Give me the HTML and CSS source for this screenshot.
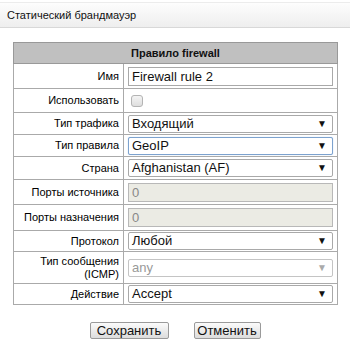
FILE: index.html
```html
<!DOCTYPE html>
<html lang="ru">
<head>
    <meta charset="UTF-8" />
    <title>Статический брандмауэр</title>
    <link rel="stylesheet" href="styles.css">
</head>
<body>
<div class="page-title">Статический брандмауэр</div>

<table class="rule-table">
    <tr class="head-row">
        <th colspan="2">Правило firewall</th>
    </tr>
    <tr class="r25">
        <td class="label">Имя</td>
        <td class="field"><input type="text" class="text-input" value="Firewall rule 2"></td>
    </tr>
    <tr class="r24">
        <td class="label">Использовать</td>
        <td class="field"><input type="checkbox" class="check"></td>
    </tr>
    <tr class="r22">
        <td class="label">Тип трафика</td>
        <td class="field">
            <div class="select-box"><span class="select-value">Входящий</span><span class="arrow">▼</span></div>
        </td>
    </tr>
    <tr class="r22">
        <td class="label">Тип правила</td>
        <td class="field">
            <div class="select-box focused"><span class="select-value">GeoIP</span><span class="arrow">▼</span></div>
        </td>
    </tr>
    <tr class="r23">
        <td class="label">Страна</td>
        <td class="field">
            <div class="select-box"><span class="select-value">Afghanistan (AF)</span><span class="arrow">▼</span></div>
        </td>
    </tr>
    <tr class="r25">
        <td class="label">Порты источника</td>
        <td class="field"><input type="text" class="text-input" value="0" disabled></td>
    </tr>
    <tr class="r26">
        <td class="label">Порты назначения</td>
        <td class="field"><input type="text" class="text-input" value="0" disabled></td>
    </tr>
    <tr class="r21">
        <td class="label">Протокол</td>
        <td class="field">
            <div class="select-box"><span class="select-value">Любой</span><span class="arrow">▼</span></div>
        </td>
    </tr>
    <tr class="r32">
        <td class="label">Тип сообщения<br>(ICMP)</td>
        <td class="field">
            <div class="select-box disabled"><span class="select-value">any</span><span class="arrow">▼</span></div>
        </td>
    </tr>
    <tr class="r21">
        <td class="label">Действие</td>
        <td class="field">
            <div class="select-box"><span class="select-value">Accept</span><span class="arrow">▼</span></div>
        </td>
    </tr>
</table>

<div class="buttons">
    <button class="btn btn-save">Сохранить</button>
    <button class="btn btn-cancel">Отменить</button>
</div>
</body>
</html>
```

FILE: styles.css
```css
* {
    box-sizing: border-box;
    margin: 0;
    padding: 0;
}

body {
    background-color: white;
    font-family: 'Liberation Sans', Arial, sans-serif;
    font-size: 11px;
    color: #111;
}

.page-title {
    margin-top: 2px;
    height: 26px;
    line-height: 25px;
    padding-left: 7px;
    background: linear-gradient(#fdfdfd, #eeeeee);
    border-top: 1px solid #ececec;
    border-bottom: 1px solid #d8d8d8;
    color: #111;
}

.rule-table {
    margin: 14px 0 0 13px;
    width: 325px;
    border-collapse: collapse;
    border: 1px solid #999;
}

.head-row th {
    height: 21px;
    background-color: #c0c0c0;
    font-weight: bold;
    font-size: 11px;
    text-align: center;
    border: 1px solid #999;
    color: #111;
}

.rule-table td {
    border: 1px solid #aaa;
    vertical-align: middle;
}

.r21 td { height: 21px; }
.r22 td { height: 22px; }
.r23 td { height: 23px; }
.r24 td { height: 24px; }
.r25 td { height: 25px; }
.r26 td { height: 26px; }
.r32 td { height: 32px; }

.label {
    width: 110px;
    text-align: right;
    padding-right: 4px;
    line-height: 13px;
    color: #000;
}

.field {
    padding: 0 4px;
}

.text-input {
    display: block;
    width: 100%;
    height: 19px;
    padding: 0 3px;
    border: 1px solid #a9a9a9;
    font-family: 'Liberation Sans', Arial, sans-serif;
    font-size: 13px;
    color: #111;
    background-color: white;
}

.text-input:disabled {
    background-color: #ebebe4;
    color: #888;
    border-color: #b8b8b8;
}

.check {
    display: block;
    appearance: none;
    width: 12px;
    height: 12px;
    margin-left: 3px;
    border: 1px solid #b4b4b4;
    border-radius: 3px;
    background: linear-gradient(#f4f4f4, #dedede);
}

.select-box {
    position: relative;
    height: 18px;
    border: 1px solid #a9a9a9;
    border-radius: 2px;
    background-color: white;
    font-size: 13px;
    line-height: 16px;
    padding-left: 3px;
    color: #111;
}

.select-box.focused {
    border-color: #7da2ce;
    box-shadow: 0 0 1px #9cc0ea;
}

.select-box.disabled {
    color: #999;
    border-color: #c4c4c4;
}

.arrow {
    position: absolute;
    right: 5px;
    top: 0;
    font-size: 10px;
    color: #111;
}

.select-box.disabled .arrow {
    color: #aaa;
}

.buttons {
    display: flex;
    justify-content: center;
    gap: 25px;
    margin-top: 17px;
}

.btn {
    height: 17px;
    border: 1px solid #9a9a9a;
    border-radius: 2px;
    background: linear-gradient(#fbfbfb, #dcdcdc);
    font-family: 'Liberation Sans', Arial, sans-serif;
    font-size: 13px;
    line-height: 15px;
    color: #111;
}

.btn-save {
    width: 79px;
}

.btn-cancel {
    width: 67px;
}
```
